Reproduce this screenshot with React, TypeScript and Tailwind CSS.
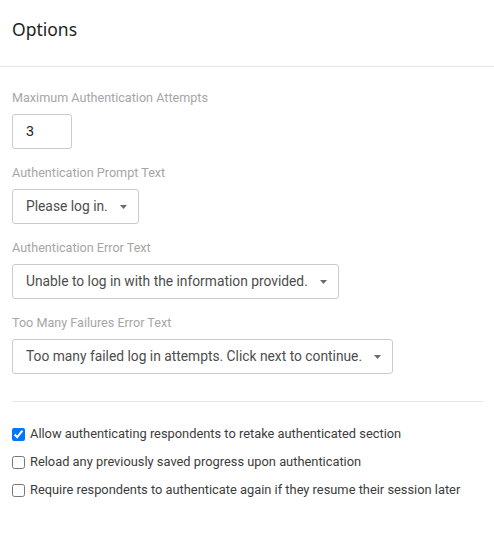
import React from "react";

const fields = [
  { label: "Authentication Prompt Text", value: "Please log in." },
  { label: "Authentication Error Text", value: "Unable to log in with the information provided." },
  { label: "Too Many Failures Error Text", value: "Too many failed log in attempts. Click next to continue." },
];

const checks = [
  { label: "Allow authenticating respondents to retake authenticated section", checked: true },
  { label: "Reload any previously saved progress upon authentication", checked: false },
  { label: "Require respondents to authenticate again if they resume their session later", checked: false },
];

function Caret() {
  return (
    <svg width="7" height="4" viewBox="0 0 7 4" className="ml-[12px] shrink-0">
      <path d="M0 0 L7 0 L3.5 4 Z" fill="#6b6b6b" />
    </svg>
  );
}

export default function App() {
  return (
    <div className="w-[494px] h-[559px] bg-white font-['Roboto',sans-serif] text-[#3b3b3b]">
      <div className="h-[67px] border-b border-[#e6e6e6] px-3 pt-4">
        <h1 className="text-[17.5px] leading-[26px] text-[#1f1f1f] font-['Noto_Sans',sans-serif]">Options</h1>
      </div>

      <div className="px-3 pt-[22px]">
        <div className="flex flex-col gap-[15px]">
          <div>
            <p className="text-[12.6px] leading-[18px] text-[#a6a6a6]">Maximum Authentication Attempts</p>
            <div className="mt-[7px] w-[60px] h-[35px] border border-[#cccccc] rounded-[3px] pl-[13px] flex items-center text-[14px] text-[#1f1f1f] font-['Liberation_Sans',sans-serif]">
              3
            </div>
          </div>
          {fields.map((f) => (
            <div key={f.label}>
              <p className="text-[12.6px] leading-[18px] text-[#a6a6a6]">{f.label}</p>
              <div className="mt-[7px] inline-flex items-center h-[35px] border border-[#cccccc] rounded-[3px] pl-[13px] pr-[11px] text-[13.8px] text-[#4d4d4d]">
                <span>{f.value}</span>
                <Caret />
              </div>
            </div>
          ))}
        </div>

        <div className="mt-[27px] w-[471px] border-t border-[#e6e6e6]" />

        <div className="pt-[22px] flex flex-col gap-[8px]">
          {checks.map((c) => (
            <label key={c.label} className="flex items-center h-[20px] text-[12.85px] text-[#3b3b3b]">
              <input type="checkbox" defaultChecked={c.checked} className="w-[13px] h-[13px] m-0 mr-[5px]" />
              <span>{c.label}</span>
            </label>
          ))}
        </div>
      </div>
    </div>
  );
}
